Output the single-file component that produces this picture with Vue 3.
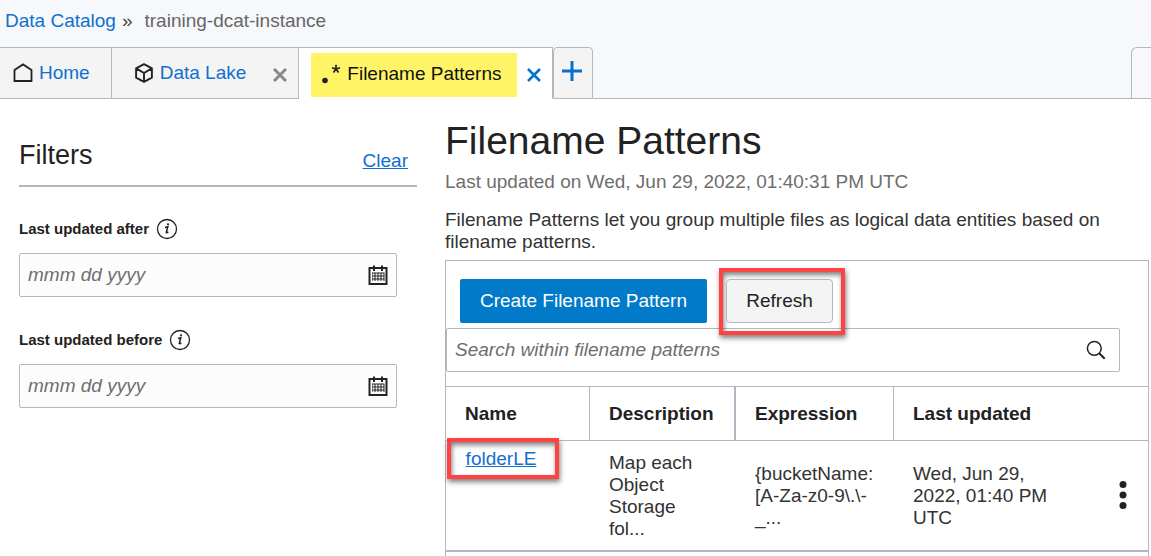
<script setup>
import { ref } from 'vue'

const filters = [
  { id: 'after', label: 'Last updated after' },
  { id: 'before', label: 'Last updated before' },
]
const dates = ref({ after: '', before: '' })
const query = ref('')
const columns = ['Name', 'Description', 'Expression', 'Last updated']
const rows = [
  {
    name: 'folderLE',
    description: ['Map each', 'Object', 'Storage', 'fol...'],
    expression: ['{bucketName:', '[A-Za-z0-9\\.\\-', '_...'],
    updated: ['Wed, Jun 29,', '2022, 01:40 PM', 'UTC'],
  },
]
</script>

<template>
  <div class="page">
    <header>
      <nav class="crumbs" aria-label="Breadcrumb">
        <a href="#">Data Catalog</a><span class="sep">»</span><span class="here">training-dcat-instance</span>
      </nav>
      <nav class="tabs" aria-label="Open tabs">
        <div class="tab home">
          <a href="#">
            <svg width="20" height="20" viewBox="0 0 20 20" fill="none" stroke="#222" stroke-width="1.8"><path d="M1.500 18V7L10 1.400 18.500 7v11z" /></svg>
            Home
          </a>
        </div>
        <div class="tab lake">
          <a href="#">
            <svg width="20" height="20" viewBox="0 0 20 20" fill="none" stroke="#222" stroke-width="1.9" stroke-linejoin="round"><path d="M10 1.200l7.900 4.200v9.200L10 18.800l-7.900-4.200V5.400zM2.100 5.400L10 10l7.900-4.600M10 10v8.800" /></svg>
            Data Lake
          </a>
          <button class="close" type="button" aria-label="Close Data Lake">
            <svg width="14" height="14" viewBox="0 0 14 14" fill="none" stroke="#868a8c" stroke-width="3"><path d="M1 1l12 12M13 1L1 13" /></svg>
          </button>
        </div>
        <div class="tab active">
          <a class="current" href="#" aria-current="page">
            <svg width="20" height="20" viewBox="0 0 20 20" fill="none" stroke="#222" stroke-width="1.7"><circle cx="4" cy="16.500" r="2.800" fill="#222" stroke="none" /><path d="M15 5V.800M15 5l4-1.300M15 5l2.500 3.500M15 5l-2.500 3.500M15 5l-4-1.300" /></svg>
            Filename Patterns
          </a>
          <button class="close" type="button" aria-label="Close Filename Patterns">
            <svg width="14" height="14" viewBox="0 0 14 14" fill="none" stroke="#0572ce" stroke-width="2.600"><path d="M1 1l12 12M13 1L1 13" /></svg>
          </button>
        </div>
        <button class="add" type="button" aria-label="New tab">
          <svg width="20" height="20" viewBox="0 0 20 20" fill="none" stroke="#0572ce" stroke-width="3"><path d="M10 0v20M0 10h20" /></svg>
        </button>
        <div class="filler"></div>
        <div class="side-tab"></div>
      </nav>
    </header>

    <div class="body">
      <aside>
        <div class="filter-head">
          <h2>Filters</h2>
          <a href="#">Clear</a>
        </div>
        <div v-for="f in filters" :key="f.id" class="field">
          <div class="label-row">
            <label :for="f.id">{{ f.label }}</label>
            <svg width="22" height="22" viewBox="0 0 22 22"><circle cx="11" cy="11" r="9.500" fill="none" stroke="#222" stroke-width="1.300" /><circle cx="12" cy="6.300" r="1.100" fill="#222" /><path d="M9 9.600l2.800-.7-1.500 5.300c-.2.900.6.900 2-.5" fill="none" stroke="#222" stroke-width="1.500" /></svg>
          </div>
          <div class="box">
            <input :id="f.id" v-model="dates[f.id]" type="text" placeholder="mmm dd yyyy" />
            <button type="button" :aria-label="'Pick date: ' + f.label">
              <svg width="20" height="20" viewBox="0 0 20 20"><path d="M1.500 3h17v16h-17z" fill="none" stroke="#222" stroke-width="2" /><path d="M6 .500V6M14 .500V6" stroke="#222" stroke-width="2" /><path d="M4 7.500h12.500v8.500H4z" fill="#222" /><path d="M4.500 9.500h12M4.500 12.500h12M4.500 15.500h12" stroke="#fcfcfc" stroke-width="1.800" stroke-dasharray="2 1" /></svg>
            </button>
          </div>
        </div>
      </aside>

      <main>
        <h1>Filename Patterns</h1>
        <p class="stamp">Last updated on Wed, Jun 29, 2022, 01:40:31 PM UTC</p>
        <p class="intro">Filename Patterns let you group multiple files as logical data entities based on filename patterns.</p>
        <section class="panel">
          <div class="actions">
            <button class="primary" type="button">Create Filename Pattern</button>
            <div class="mark"><button class="secondary" type="button">Refresh</button></div>
          </div>
          <div class="search">
            <input v-model="query" type="text" aria-label="Search within filename patterns" placeholder="Search within filename patterns" />
            <button type="button" aria-label="Search">
              <svg width="20" height="20" viewBox="0 0 20 20" fill="none" stroke="#222" stroke-width="1.500"><circle cx="8.300" cy="8.300" r="6.900" /><path d="M13 13l5.700 5.700" stroke-width="2" /></svg>
            </button>
          </div>
          <table>
            <colgroup><col class="c1" /><col class="c2" /><col class="c3" /><col /><col class="c5" /></colgroup>
            <thead>
              <tr>
                <th v-for="c in columns" :key="c" scope="col">{{ c }}</th>
                <td></td>
              </tr>
            </thead>
            <tbody>
              <tr v-for="r in rows" :key="r.name">
                <td class="name"><span class="ring"><a href="#">{{ r.name }}</a></span></td>
                <td><div v-for="t in r.description" :key="t">{{ t }}</div></td>
                <td><div v-for="t in r.expression" :key="t">{{ t }}</div></td>
                <td><div v-for="t in r.updated" :key="t">{{ t }}</div></td>
                <td class="more">
                  <button type="button" aria-label="Actions">
                    <svg width="8" height="28" viewBox="0 0 8 28" fill="#222"><circle cx="4" cy="3.500" r="3.500" /><circle cx="4" cy="14" r="3.500" /><circle cx="4" cy="24.500" r="3.500" /></svg>
                  </button>
                </td>
              </tr>
            </tbody>
          </table>
        </section>
      </main>
    </div>
  </div>
</template>

<style>
html, body { background: #fff; }
body { margin: 0; overflow: hidden; }
</style>

<style scoped>
* { box-sizing: border-box; }
.page {
  font: 19px/22px "Liberation Sans", Arial, sans-serif;
  color: #333;
}
svg { display: block; flex: none; }
a { color: #1070ce; }
button, input { font: inherit; color: inherit; margin: 0; }
button { cursor: pointer; }
header { background: #f6f8fb; }
header a { text-decoration: none; }
.crumbs { height: 47px; padding: 10px 5px; display: flex; }
.sep { margin: 0 12px 0 6px; color: #444; }
.here { color: #666; }

.tabs { display: flex; height: 52px; }
.tab {
  display: flex;
  align-items: center;
  background: #f4f4f4;
  border: solid #b1b8c2;
  border-width: 1px 1px 1px 0;
}
.tab a { display: flex; align-items: center; gap: 6px; }
.home { padding: 0 21px 0 13px; }
.lake { padding: 0 11px 0 22px; }
.lake .close { margin-left: 27px; }
.active { background: #fff; border-bottom-color: #fff; padding: 0 11px 0 12px; }
.active .current {
  height: 44px;
  padding: 0 15px 2px 10px;
  background: #fff466;
  color: #111;
  margin-top: 3px;
}
.active .close { margin-left: 10px; }
.close { border: 0; background: none; padding: 4px 0 0; }
.add {
  width: 40px;
  display: flex;
  justify-content: center;
  align-items: center;
  padding: 0 2px 4px 0;
  background: #f4f4f4;
  border: 1px solid #b1b8c2;
  border-radius: 4px 4px 0 0;
}
.filler { flex: 1; border-bottom: 1px solid #b1b8c2; }
.side-tab {
  width: 20px;
  border: solid #b1b8c2;
  border-width: 1px 0 1px 1px;
  border-radius: 6px 0 0 0;
}

.body { display: flex; gap: 28px; padding: 0 2px 0 19px; }
aside { width: 398px; flex: none; }
.filter-head {
  display: flex;
  justify-content: space-between;
  align-items: flex-end;
  height: 88px;
  padding: 0 9px 13px 0;
  border-bottom: 2px solid #b1b8c2;
}
h2 { margin: 0; font-size: 27px; line-height: 34px; font-weight: 400; color: #222; }
.field { padding: 31px 20px 0 0; }
.field + .field { padding-top: 32px; }
.label-row { display: flex; align-items: center; gap: 7px; height: 22px; margin-bottom: 13px; }
.label-row label { font-size: 15px; font-weight: 700; color: #222; }
.box, .search {
  display: flex;
  align-items: center;
  height: 44px;
  border: 1px solid #b1b8c2;
  border-radius: 2px;
  padding: 0 8px;
}
.box { background: #fcfcfc; }
input {
  flex: 1;
  min-width: 0;
  height: 40px;
  border: 0;
  outline: 0;
  padding: 0;
  background: transparent;
}
input::placeholder { color: #6e6e6e; font-style: italic; opacity: 1; }
.box button, .search button, .more button { border: 0; background: none; padding: 0; }

main { flex: 1; min-width: 0; }
h1 { margin: 18px 0 0; font-size: 39px; line-height: 48px; font-weight: 400; color: #222; }
.stamp { margin: 6px 0 16px; color: #6e6e6e; }
.intro { margin: 0; }
.panel { margin-top: 7px; border: 1px solid #b1b8c2; border-bottom: 0; height: 320px; }
.actions { display: flex; gap: 12px; align-items: flex-start; padding: 7px 14px 0; height: 67px; }
.primary {
  height: 44px;
  padding: 0 20px;
  border: 0;
  border-radius: 2px;
  background: #007ac9;
  color: #fff;
  margin-top: 11px;
}
.mark {
  width: 126px;
  height: 67px;
  display: flex;
  align-items: flex-start;
  justify-content: center;
  border: 4px solid #ff4343;
  position: relative;
  z-index: 1;
  box-shadow: 1px 3px 5px rgba(0, 0, 0, 0.5), inset 1px 3px 5px rgba(0, 0, 0, 0.5);
  padding: 7px 5px 0 0;
}
.secondary {
  height: 44px;
  padding: 0 19px;
  border: 1px solid #b1b8c2;
  border-radius: 4px;
  background: #f4f4f4;
  color: #222;
}
.search { margin-right: 28px; padding-right: 13px; }
table {
  width: 100%;
  margin-top: 14px;
  border-collapse: separate;
  border-spacing: 0;
  table-layout: fixed;
  border-top: 1px solid #b1b8c2;
}
.c1 { width: 144px; }
.c2 { width: 146px; }
.c3 { width: 158px; }
.c5 { width: 48px; }
th, thead td { height: 54px; border-bottom: 1px solid #b1b8c2; }
th { padding: 0 0 0 19px; text-align: left; color: #222; border-right: 1px solid #b1b8c2; }
th:nth-child(2) { border-right-width: 2px; }
th:nth-child(4) { border-right: 0; }
tbody td { height: 111px; padding: 0 0 0 19px; border-bottom: 2px solid #b1b8c2; }
tbody .more { padding-top: 4px; }
tbody .name { vertical-align: top; padding: 0; }
.ring {
  display: flex;
  align-items: center;
  justify-content: center;
  width: 112px;
  height: 41px;
  margin: -3px 0 0 1px;
  border: 4px solid #ff4343;
  position: relative;
  padding-right: 4px;
  box-shadow: 1px 3px 5px rgba(0, 0, 0, 0.5), inset 1px 3px 5px rgba(0, 0, 0, 0.5);
}
</style>
